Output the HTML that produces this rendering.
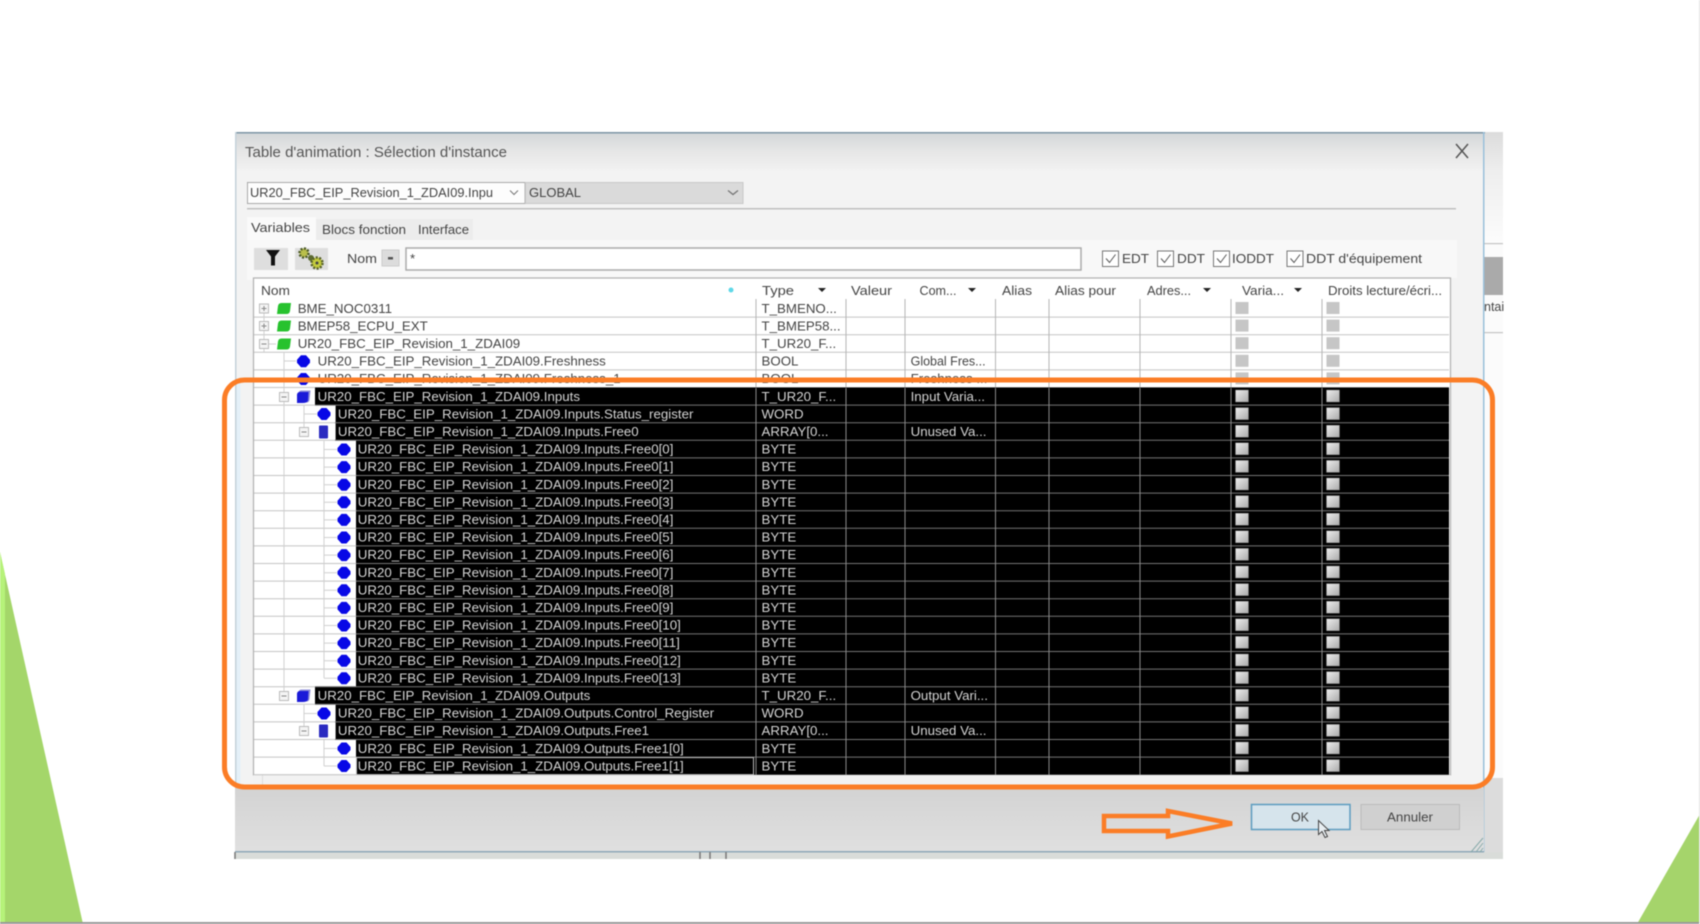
<!DOCTYPE html>
<html><head><meta charset="utf-8"><title>Table d'animation</title>
<style>
html,body{margin:0;padding:0;background:#fff;width:1700px;height:924px;overflow:hidden}
svg{display:block;filter:blur(.6px)}
text{font-family:"Liberation Sans",sans-serif;font-size:13.3px;fill:#444}
.k text{fill:#d4d4d4}
</style></head><body>
<svg width="1700" height="924" viewBox="0 0 1700 924" xmlns="http://www.w3.org/2000/svg">
<defs>
<linearGradient id="tb" x1="0" y1="0" x2="0" y2="1"><stop offset="0" stop-color="#d2d6d8"/><stop offset=".5" stop-color="#e6e6e6"/><stop offset="1" stop-color="#f1f1f1"/></linearGradient>
<linearGradient id="bot" x1="0" y1="0" x2="0" y2="1"><stop offset="0" stop-color="#d3d3d3"/><stop offset="1" stop-color="#e0e0e0"/></linearGradient>
<linearGradient id="sq" x1="0" y1="0" x2="1" y2="1"><stop offset="0" stop-color="#eee"/><stop offset="1" stop-color="#aaa"/></linearGradient>
<linearGradient id="rs" x1="0" y1="0" x2="0" y2="1"><stop offset="0" stop-color="#dcdcdc"/><stop offset=".35" stop-color="#eeeeee"/><stop offset="1" stop-color="#fcfcfc"/></linearGradient>
<polygon id="dot" points="-2.500,-6 2.500,-6 6.500,-1.500 6.500,1.500 2.500,6 -2.500,6 -6.500,1.500 -6.500,-1.500" fill="#0808e6"/>
<path id="gb" d="M-6-2.500Q-5.500-5.500-2.500-5.500H7L6 2.500Q5.500 5.500 2.500 5.500H-7Z" fill="#27c22e"/>
<g id="bb"><path d="M-5-4Q-4.500-6.500-2-6.500H7L6 3Q5.500 5.500 3 5.500H-5Z" fill="#8c8cd8"/><path d="M-6.500-2.500Q-6-5-3.500-5H5L4.500 3.500Q4 6-1 6H-6.500Z" fill="#1a1ad8"/></g>
<rect id="bar" x="-4.500" y="-6.500" width="9" height="13" rx="1" fill="#2a2ac0"/>
<g id="plus"><rect x="-4.500" y="-4.500" width="9" height="9" fill="#f4f4f4" stroke="#bbb"/><path d="M-2.500 0H2.500M0-2.500V2.500" stroke="#888"/></g>
<g id="minus"><rect x="-4.500" y="-4.500" width="9" height="9" fill="#f4f4f4" stroke="#bbb"/><path d="M-2.500 0H2.500" stroke="#888"/></g>
<rect id="s" x="-6.500" y="-6" width="13" height="12" fill="url(#sq)" stroke="#777" stroke-width=".4"/>
<rect id="sl" x="-6.500" y="-6" width="13" height="12" fill="#c6c6c6"/>
</defs>

<!-- page green triangles -->
<polygon points="0,552 83,924 0,924" fill="#a4d66a"/>
<polygon points="0,552 5,574 5,924 0,924" fill="#b6f27a"/>
<polygon points="1637,924 1700,814 1700,924" fill="#a5d46b"/>
<rect x="0" y="922" width="1700" height="2" fill="#999"/>
<rect x="1699" y="0" width="1" height="924" fill="#e2e2e2"/>

<!-- dialog -->
<rect x="1484" y="132" width="19" height="727" fill="#fbfbfb"/>
<rect x="1484" y="132" width="19" height="111" fill="url(#rs)"/>
<rect x="1484" y="243" width="19" height="1.200" fill="#c4c4c4"/>
<rect x="1484" y="257" width="19" height="38" fill="#aaa"/>
<rect x="1484" y="332" width="19" height="1.200" fill="#c4c4c4"/>
<rect x="1484" y="778" width="19" height="81" fill="#dcdcdc"/>
<text x="1484" y="311" style="font-size:12.5px">ntai</text>
<rect x="235" y="132" width="1249" height="720" fill="#f3f3f3"/>
<rect x="235" y="132" width="1249" height="38" fill="url(#tb)"/>
<rect x="235" y="132" width="1250" height="1.500" fill="#7d96a6"/>
<rect x="235" y="132" width="1.500" height="727" fill="#c5d2da"/>
<rect x="236.500" y="380" width="4" height="408" fill="#e4f0f8"/>
<rect x="1483" y="132" width="1.500" height="720" fill="#9ac0da"/>
<rect x="235" y="788" width="1249" height="64" fill="url(#bot)"/>
<rect x="235" y="852" width="1268" height="7" fill="#d9dcd9"/>
<rect x="235" y="851" width="1249" height="1.500" fill="#8fa9b8"/>
<path d="M235 852V859M700 852V859M710 852V859M726 852V859" stroke="#777" stroke-width="1.500"/>
<text x="245" y="157" textLength="262" lengthAdjust="spacingAndGlyphs" style="font-size:15px;fill:#555">Table d'animation : Sélection d'instance</text>
<path d="M1456 144L1468 158M1468 144L1456 158" stroke="#555" stroke-width="1.500" fill="none"/>

<!-- combos -->
<rect x="247.500" y="182.500" width="277.500" height="21" fill="#fdfdfd" stroke="#a8a8a8"/>
<text x="250" y="197" textLength="243" lengthAdjust="spacingAndGlyphs">UR20_FBC_EIP_Revision_1_ZDAI09.Inpu</text>
<path d="M510 190.500l4 4 4-4" stroke="#777" fill="none"/>
<rect x="525.500" y="182.500" width="217.500" height="21" fill="#dadada" stroke="#c8c8c8"/>
<text x="529" y="197" textLength="52" lengthAdjust="spacingAndGlyphs">GLOBAL</text>
<path d="M728 190.500l5 4 5-4" stroke="#777" fill="none" stroke-width="1.300"/>
<rect x="247" y="208" width="1209" height="1.500" fill="#c0c0c0"/>

<!-- tabs -->
<rect x="316" y="219" width="157" height="21" fill="#ececec"/>
<rect x="247" y="217" width="69" height="24" fill="#fafafa"/>
<rect x="247" y="240" width="1210" height="40" fill="#f8f8f8"/>
<text x="251" y="232" textLength="59" lengthAdjust="spacingAndGlyphs">Variables</text>
<text x="322" y="234" textLength="84" lengthAdjust="spacingAndGlyphs">Blocs fonction</text>
<text x="418" y="234" textLength="51" lengthAdjust="spacingAndGlyphs">Interface</text>

<!-- toolbar -->
<rect x="254" y="248" width="34" height="22" fill="#dedede"/>
<path d="M266 250h14l-5 6.500v9h-4v-9Z" fill="#111"/>
<rect x="295" y="248" width="33" height="22" fill="#dedede"/>
<circle cx="304" cy="253" r="4.500" fill="#b9bf4a" stroke="#4c5a28" stroke-width="2.500" stroke-dasharray="2 1.500"/>
<circle cx="311" cy="258" r="3" fill="#5c6a30"/>
<circle cx="317" cy="263" r="5.500" fill="#c4cc3c" stroke="#56602a" stroke-width="2.500" stroke-dasharray="2 1.500"/>
<circle cx="317" cy="263" r="1.500" fill="#444"/>
<text x="347" y="263" textLength="30" lengthAdjust="spacingAndGlyphs">Nom</text>
<rect x="382" y="250" width="17" height="16" fill="#dcdcdc" stroke="#ccc"/>
<rect x="388" y="257" width="5" height="2.500" fill="#555"/>
<rect x="406" y="248" width="675" height="22" fill="#fff" stroke="#aaa" stroke-width="1.500"/>
<text x="410" y="263">*</text>
<g fill="#fff" stroke="#777" stroke-width="1">
<rect x="1102.500" y="251" width="16" height="15.500"/><rect x="1157.500" y="251" width="16" height="15.500"/><rect x="1213.500" y="251" width="16" height="15.500"/><rect x="1287" y="251" width="16" height="15.500"/>
</g>
<g fill="none" stroke="#555" stroke-width="1">
<path d="M1106 258.500l3.500 4 6-8"/><path d="M1161 258.500l3.500 4 6-8"/><path d="M1217 258.500l3.500 4 6-8"/><path d="M1290.500 258.500l3.500 4 6-8"/>
</g>
<text x="1122" y="263" textLength="27" lengthAdjust="spacingAndGlyphs">EDT</text>
<text x="1177" y="263" textLength="28" lengthAdjust="spacingAndGlyphs">DDT</text>
<text x="1232" y="263" textLength="42" lengthAdjust="spacingAndGlyphs">IODDT</text>
<text x="1306" y="263" textLength="116" lengthAdjust="spacingAndGlyphs">DDT d'équipement</text>

<!-- table -->
<rect x="1451" y="278" width="32" height="510" fill="#f3f3f3"/>
<rect x="253.500" y="278" width="1197" height="497" fill="#fff" stroke="#b0b0b0" stroke-width="1.200"/>
<rect x="253.500" y="775" width="1197" height="13" fill="#f2f2f2"/>
<rect x="262" y="775" width="1" height="13" fill="#ddd"/>

<!-- headers -->
<text x="261" y="295" textLength="29" lengthAdjust="spacingAndGlyphs">Nom</text>
<circle cx="731" cy="290" r="2.500" fill="#5fd8e8"/>
<text x="762" y="295" textLength="32" lengthAdjust="spacingAndGlyphs">Type</text>
<text x="851" y="295" textLength="41" lengthAdjust="spacingAndGlyphs">Valeur</text>
<text x="919.500" y="295" textLength="37" lengthAdjust="spacingAndGlyphs">Com...</text>
<text x="1002" y="295" textLength="30" lengthAdjust="spacingAndGlyphs">Alias</text>
<text x="1055" y="295" textLength="61" lengthAdjust="spacingAndGlyphs">Alias pour</text>
<text x="1147" y="295" textLength="44" lengthAdjust="spacingAndGlyphs">Adres...</text>
<text x="1242" y="295" textLength="42" lengthAdjust="spacingAndGlyphs">Varia...</text>
<text x="1328" y="295" textLength="114" lengthAdjust="spacingAndGlyphs">Droits lecture/écri...</text>
<g fill="#222"><path d="M818 288h8l-4 4z"/><path d="M968 288h8l-4 4z"/><path d="M1203 288h8l-4 4z"/><path d="M1294 288h8l-4 4z"/></g>

<!-- grid -->
<path d="M254 317.100H1449M254 334.700H1449M254 352.300H1449M254 369.900H1449M254 387.500H1449M254 405.100H335M254 422.700H335M254 440.300H356M254 457.900H356M254 475.500H356M254 493.100H356M254 510.700H356M254 528.300H356M254 545.900H356M254 563.500H356M254 581.100H356M254 598.700H356M254 616.300H356M254 633.900H356M254 651.500H356M254 669.100H356M254 686.700H356M254 704.300H335M254 721.900H335M254 739.500H356M254 757.100H356M254 774.700H1449" stroke="#c4c4c4" stroke-width="1" fill="none"/>
<path d="M756 299V388M846 299V388M905 299V388M995.500 299V388M1049 299V388M1140 299V388M1231 299V388M1322 299V388" stroke="#b5b5b5" stroke-width="1" fill="none"/>

<!-- tree lines -->
<path d="M264 352V344H276M264 313V352M284 352V696M284 361H296M284 379H296M304 405V432M304 414H317M324 441V678M324 449.500H337M324 467.100H337M324 484.700H337M324 502.300H337M324 519.900H337M324 537.500H337M324 555.100H337M324 572.700H337M324 590.300H337M324 607.900H337M324 625.500H337M324 643.100H337M324 660.700H337M324 678.300H337M304 704V731M304 713.500H317M324 740V766M324 748.500H337M324 766H337" stroke="#d0d0d0" fill="none" stroke-width="1"/>

<!-- black selected rows -->
<g fill="#000">
<rect x="315" y="387.500" width="1134" height="17.600"/>
<rect x="335.600" y="405.100" width="1113.400" height="35.200"/>
<rect x="356" y="440.300" width="1093" height="246.400"/>
<rect x="315" y="686.700" width="1134" height="17.600"/>
<rect x="335.600" y="704.300" width="1113.400" height="35.200"/>
<rect x="356" y="739.500" width="1093" height="35.200"/>
</g>
<path d="M315 405.100H1449M335 422.700H1449M335 440.300H1449M356 457.900H1449M356 475.500H1449M356 493.100H1449M356 510.700H1449M356 528.300H1449M356 545.900H1449M356 563.500H1449M356 581.100H1449M356 598.700H1449M356 616.300H1449M356 633.900H1449M356 651.500H1449M356 669.100H1449M315 686.700H1449M315 704.300H1449M335 721.900H1449M335 739.500H1449M356 757.100H1449" stroke="#757575" stroke-width="1" fill="none"/>
<path d="M756 388V775M846 388V775M905 388V775M995.500 388V775M1049 388V775M1140 388V775M1231 388V775M1322 388V775" stroke="#8a8a8a" stroke-width="1" fill="none"/>
<rect x="356.500" y="757.600" width="397" height="17" fill="none" stroke="#bbb" stroke-width="1"/>

<!-- tree icons -->
<use href="#plus" x="264" y="308.500"/><use href="#plus" x="264" y="326"/><use href="#minus" x="264" y="344"/>
<use href="#gb" x="284" y="308.500"/><use href="#gb" x="284" y="326"/><use href="#gb" x="284" y="344"/>
<use href="#dot" x="303.500" y="361.300"/><use href="#dot" x="303.500" y="379"/>
<use href="#minus" x="284" y="397"/><use href="#bb" x="303.500" y="397"/>
<use href="#dot" x="324" y="414"/>
<use href="#minus" x="304" y="432"/><use href="#bar" x="323.500" y="432"/>
<use href="#dot" x="344" y="449.500"/><use href="#dot" x="344" y="467.100"/><use href="#dot" x="344" y="484.700"/><use href="#dot" x="344" y="502.300"/><use href="#dot" x="344" y="519.900"/><use href="#dot" x="344" y="537.500"/><use href="#dot" x="344" y="555.100"/><use href="#dot" x="344" y="572.700"/><use href="#dot" x="344" y="590.300"/><use href="#dot" x="344" y="607.900"/><use href="#dot" x="344" y="625.500"/><use href="#dot" x="344" y="643.100"/><use href="#dot" x="344" y="660.700"/><use href="#dot" x="344" y="678.300"/>
<use href="#minus" x="284" y="696"/><use href="#bb" x="303.500" y="696"/>
<use href="#dot" x="324" y="713.500"/>
<use href="#minus" x="304" y="731"/><use href="#bar" x="323.500" y="731"/>
<use href="#dot" x="344" y="748.500"/><use href="#dot" x="344" y="766"/>

<!-- names, white rows -->
<text x="297.700" y="312.800">BME_NOC0311</text>
<text x="297.700" y="330.400">BMEP58_ECPU_EXT</text>
<text x="297.700" y="348">UR20_FBC_EIP_Revision_1_ZDAI09</text>
<text x="317.600" y="365.600">UR20_FBC_EIP_Revision_1_ZDAI09.Freshness</text>
<text x="317.600" y="383.200">UR20_FBC_EIP_Revision_1_ZDAI09.Freshness_1</text>
<text x="761.500" y="312.800">T_BMENO...</text>
<text x="761.500" y="330.400">T_BMEP58...</text>
<text x="761.500" y="348">T_UR20_F...</text>
<text x="761.500" y="365.600">BOOL</text>
<text x="761.500" y="383.200">BOOL</text>
<text x="910.600" y="365.600" textLength="75" lengthAdjust="spacingAndGlyphs">Global Fres...</text>
<text x="910.600" y="383.200">Freshness ...</text>

<!-- names, selected rows -->
<g class="k">
<text x="317.600" y="400.800">UR20_FBC_EIP_Revision_1_ZDAI09.Inputs</text>
<text x="337.900" y="418.400">UR20_FBC_EIP_Revision_1_ZDAI09.Inputs.Status_register</text>
<text x="337.900" y="436">UR20_FBC_EIP_Revision_1_ZDAI09.Inputs.Free0</text>
<text x="357.800" y="453.600">UR20_FBC_EIP_Revision_1_ZDAI09.Inputs.Free0[0]</text>
<text x="357.800" y="471.200">UR20_FBC_EIP_Revision_1_ZDAI09.Inputs.Free0[1]</text>
<text x="357.800" y="488.800">UR20_FBC_EIP_Revision_1_ZDAI09.Inputs.Free0[2]</text>
<text x="357.800" y="506.400">UR20_FBC_EIP_Revision_1_ZDAI09.Inputs.Free0[3]</text>
<text x="357.800" y="524">UR20_FBC_EIP_Revision_1_ZDAI09.Inputs.Free0[4]</text>
<text x="357.800" y="541.600">UR20_FBC_EIP_Revision_1_ZDAI09.Inputs.Free0[5]</text>
<text x="357.800" y="559.200">UR20_FBC_EIP_Revision_1_ZDAI09.Inputs.Free0[6]</text>
<text x="357.800" y="576.800">UR20_FBC_EIP_Revision_1_ZDAI09.Inputs.Free0[7]</text>
<text x="357.800" y="594.400">UR20_FBC_EIP_Revision_1_ZDAI09.Inputs.Free0[8]</text>
<text x="357.800" y="612">UR20_FBC_EIP_Revision_1_ZDAI09.Inputs.Free0[9]</text>
<text x="357.800" y="629.600">UR20_FBC_EIP_Revision_1_ZDAI09.Inputs.Free0[10]</text>
<text x="357.800" y="647.200">UR20_FBC_EIP_Revision_1_ZDAI09.Inputs.Free0[11]</text>
<text x="357.800" y="664.800">UR20_FBC_EIP_Revision_1_ZDAI09.Inputs.Free0[12]</text>
<text x="357.800" y="682.400">UR20_FBC_EIP_Revision_1_ZDAI09.Inputs.Free0[13]</text>
<text x="317.600" y="700">UR20_FBC_EIP_Revision_1_ZDAI09.Outputs</text>
<text x="337.900" y="717.600">UR20_FBC_EIP_Revision_1_ZDAI09.Outputs.Control_Register</text>
<text x="337.900" y="735.200">UR20_FBC_EIP_Revision_1_ZDAI09.Outputs.Free1</text>
<text x="357.800" y="752.800">UR20_FBC_EIP_Revision_1_ZDAI09.Outputs.Free1[0]</text>
<text x="357.800" y="770.400">UR20_FBC_EIP_Revision_1_ZDAI09.Outputs.Free1[1]</text>
<text x="761.500" y="400.800">T_UR20_F...</text>
<text x="761.500" y="418.400">WORD</text>
<text x="761.500" y="436">ARRAY[0...</text>
<text x="761.500" y="453.600">BYTE</text>
<text x="761.500" y="471.200">BYTE</text>
<text x="761.500" y="488.800">BYTE</text>
<text x="761.500" y="506.400">BYTE</text>
<text x="761.500" y="524">BYTE</text>
<text x="761.500" y="541.600">BYTE</text>
<text x="761.500" y="559.200">BYTE</text>
<text x="761.500" y="576.800">BYTE</text>
<text x="761.500" y="594.400">BYTE</text>
<text x="761.500" y="612">BYTE</text>
<text x="761.500" y="629.600">BYTE</text>
<text x="761.500" y="647.200">BYTE</text>
<text x="761.500" y="664.800">BYTE</text>
<text x="761.500" y="682.400">BYTE</text>
<text x="761.500" y="700">T_UR20_F...</text>
<text x="761.500" y="717.600">WORD</text>
<text x="761.500" y="735.200">ARRAY[0...</text>
<text x="761.500" y="752.800">BYTE</text>
<text x="761.500" y="770.400">BYTE</text>
<text x="910.600" y="400.800">Input Varia...</text>
<text x="910.600" y="436">Unused Va...</text>
<text x="910.600" y="700">Output Vari...</text>
<text x="910.600" y="735.200">Unused Va...</text>
</g>

<!-- squares -->
<use href="#sl" x="1242" y="308"/><use href="#sl" x="1333" y="308"/>
<use href="#sl" x="1242" y="325.600"/><use href="#sl" x="1333" y="325.600"/>
<use href="#sl" x="1242" y="343.200"/><use href="#sl" x="1333" y="343.200"/>
<use href="#sl" x="1242" y="360.800"/><use href="#sl" x="1333" y="360.800"/>
<use href="#sl" x="1242" y="378.400"/><use href="#sl" x="1333" y="378.400"/>
<use href="#s" x="1242" y="396"/><use href="#s" x="1333" y="396"/>
<use href="#s" x="1242" y="413.600"/><use href="#s" x="1333" y="413.600"/>
<use href="#s" x="1242" y="431.200"/><use href="#s" x="1333" y="431.200"/>
<use href="#s" x="1242" y="448.800"/><use href="#s" x="1333" y="448.800"/>
<use href="#s" x="1242" y="466.400"/><use href="#s" x="1333" y="466.400"/>
<use href="#s" x="1242" y="484"/><use href="#s" x="1333" y="484"/>
<use href="#s" x="1242" y="501.600"/><use href="#s" x="1333" y="501.600"/>
<use href="#s" x="1242" y="519.200"/><use href="#s" x="1333" y="519.200"/>
<use href="#s" x="1242" y="536.800"/><use href="#s" x="1333" y="536.800"/>
<use href="#s" x="1242" y="554.400"/><use href="#s" x="1333" y="554.400"/>
<use href="#s" x="1242" y="572"/><use href="#s" x="1333" y="572"/>
<use href="#s" x="1242" y="589.600"/><use href="#s" x="1333" y="589.600"/>
<use href="#s" x="1242" y="607.200"/><use href="#s" x="1333" y="607.200"/>
<use href="#s" x="1242" y="624.800"/><use href="#s" x="1333" y="624.800"/>
<use href="#s" x="1242" y="642.400"/><use href="#s" x="1333" y="642.400"/>
<use href="#s" x="1242" y="660"/><use href="#s" x="1333" y="660"/>
<use href="#s" x="1242" y="677.600"/><use href="#s" x="1333" y="677.600"/>
<use href="#s" x="1242" y="695.200"/><use href="#s" x="1333" y="695.200"/>
<use href="#s" x="1242" y="712.800"/><use href="#s" x="1333" y="712.800"/>
<use href="#s" x="1242" y="730.400"/><use href="#s" x="1333" y="730.400"/>
<use href="#s" x="1242" y="748"/><use href="#s" x="1333" y="748"/>
<use href="#s" x="1242" y="765.600"/><use href="#s" x="1333" y="765.600"/>

<!-- buttons -->
<rect x="1251.500" y="804.500" width="98.500" height="25" fill="#d6e4ec" stroke="#5c9cc0" stroke-width="1.500"/>
<text x="1291" y="821.500" textLength="18" lengthAdjust="spacingAndGlyphs">OK</text>
<rect x="1361" y="804.500" width="98.500" height="25" fill="#d0d0d0" stroke="#bbb"/>
<text x="1387" y="821.500" textLength="46" lengthAdjust="spacingAndGlyphs">Annuler</text>
<path d="M1318.500 820.500v14l3.500-3 3 6 2.500-1-3-6h4.500z" fill="#e8eef2" stroke="#444" stroke-width="1"/>
<path d="M1483 838L1471 852M1483 843L1476 852M1483 848L1480 852" stroke="#8aa" fill="none"/>

<!-- orange annotations -->
<rect x="224.500" y="380" width="1268" height="407" rx="20" ry="20" fill="none" stroke="#fb7d26" stroke-width="5"/>
<path d="M1104 816H1168V811L1232 823.500L1168 836.500V831H1104Z" fill="none" stroke="#fb7d26" stroke-width="4.500"/>
</svg>
</body></html>
